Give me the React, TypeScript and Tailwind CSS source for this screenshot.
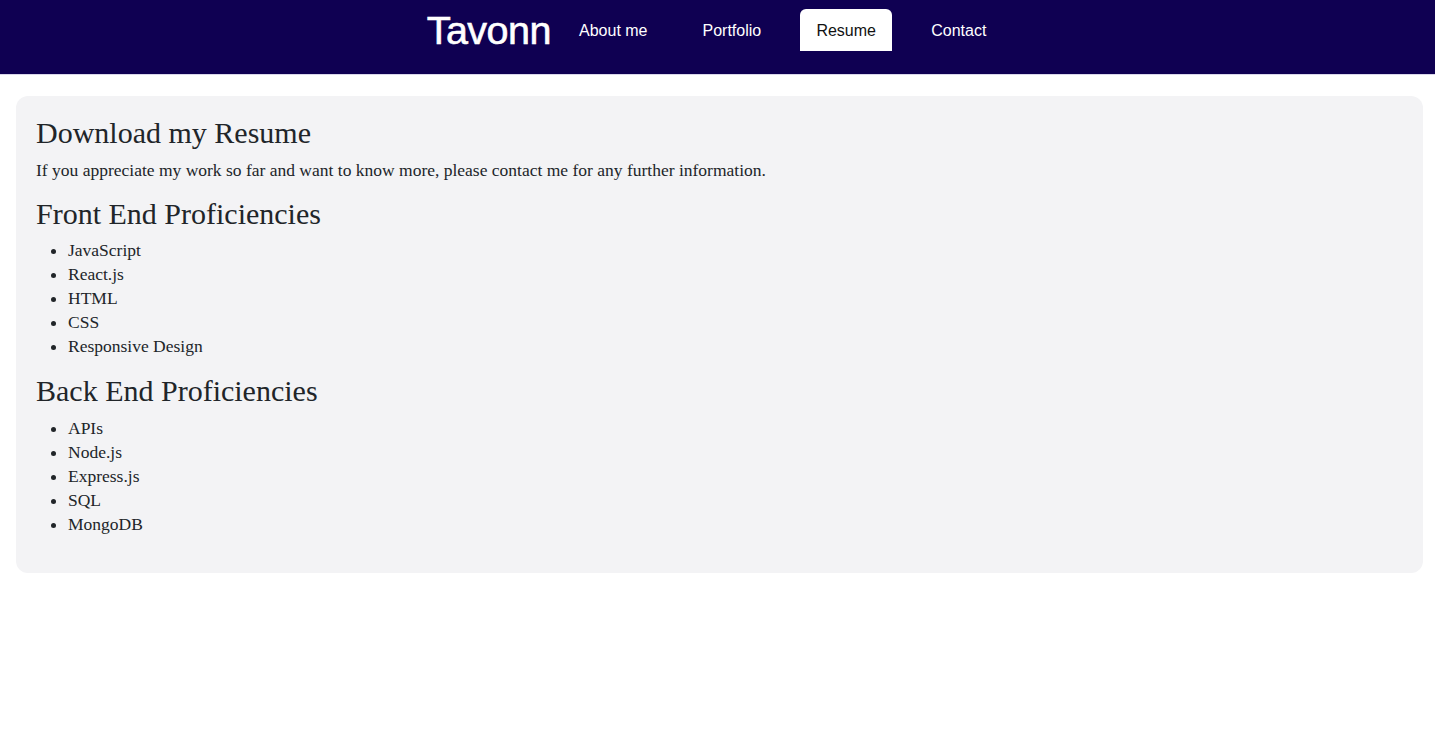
export default function App() {
  const front = ["JavaScript", "React.js", "HTML", "CSS", "Responsive Design"]
  const back = ["APIs", "Node.js", "Express.js", "SQL", "MongoDB"]

  const links = ["About me", "Portfolio", "Resume", "Contact"]
  const active = "Resume"

  return (
    <div className="min-h-screen bg-white">
      <header className="h-[75px] bg-[#0f0052] border-b border-[#d9d6ea] flex justify-center">
        <div className="flex items-start pt-[9px] ml-[-6px]">
          <span className="text-[39.5px] leading-[43px] text-white font-['Liberation_Sans',Arial,sans-serif] tracking-[-0.5px] mr-[12px] [-webkit-text-stroke:0.6px_white]">
            Tavonn
          </span>
          <nav className="flex gap-[23px]">
            {links.map((l) => (
              <a
                key={l}
                href="#"
                className={
                  "h-[42px] px-4 pt-[1px] flex items-center text-[16px] font-['Liberation_Sans',Arial,sans-serif] rounded-t-[6px] " +
                  (l === active ? "bg-white text-[#111] w-[92px] justify-center" : "text-white")
                }
              >
                {l}
              </a>
            ))}
          </nav>
        </div>
      </header>

      <main className="pl-4 pr-3 pt-[21px]">
        <section className="bg-[#f3f3f5] rounded-[12px] px-5 pt-[21px] pb-[21px] text-[#212529] font-['Liberation_Serif',Georgia,serif]">
          <h3 className="text-[30px] leading-[32px] mb-[9px]">Download my Resume</h3>
          <p className="text-[17.5px] leading-[24px] mb-[16px]">
            If you appreciate my work so far and want to know more, please contact me for any further information.
          </p>

          <h3 className="text-[30px] leading-[32px] mb-[8px]">Front End Proficiencies</h3>
          <ul className="list-disc pl-8 mb-[17px] text-[17.5px] leading-[24px]">
            {front.map((s) => (
              <li key={s}>{s}</li>
            ))}
          </ul>

          <h3 className="text-[30px] leading-[32px] mb-[9px]">Back End Proficiencies</h3>
          <ul className="list-disc pl-8 mb-[16px] text-[17.5px] leading-[24px]">
            {back.map((s) => (
              <li key={s}>{s}</li>
            ))}
          </ul>
        </section>
      </main>
    </div>
  )
}
